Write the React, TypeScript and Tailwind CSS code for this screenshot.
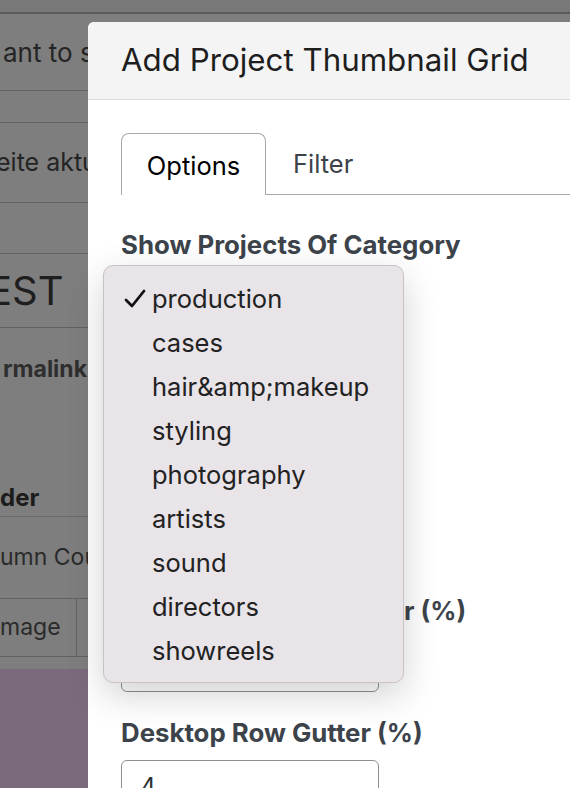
import React from "react";

const items = [
  "production",
  "cases",
  "hair&amp;makeup",
  "styling",
  "photography",
  "artists",
  "sound",
  "directors",
  "showreels",
];

function Field({ label, value }: { label: string; value?: string }) {
  return (
    <div className="mb-[26px]">
      <div className="h-[30px] whitespace-nowrap text-[25.8px] font-bold leading-[30px] text-[#3c434a]">{label}</div>
      <div className="mt-[12px] h-[54px] w-[258px] rounded-[6px] border border-[#8c8f94] bg-white px-[18px] text-[25px] leading-[52px] text-[#2c3338]">
        {value}
      </div>
    </div>
  );
}

export default function App() {
  return (
    <div
      className="relative h-[788px] w-[570px] overflow-hidden bg-[#7e7e7e]"
      style={{ fontFamily: "Inter, 'Noto Sans', sans-serif" }}
    >
      {/* background page under overlay */}
      <div className="flex flex-col whitespace-nowrap text-[#242424]">
        <div className="h-[12px] bg-[#787878]" />
        <div className="h-[2px] bg-[#5a5a5a]" />
        <div className="ml-[3px] flex h-[76px] items-center text-[26px]">ant to see</div>
        <div className="h-px bg-[#626262]" />
        <div className="h-[31px]" />
        <div className="h-px bg-[#626262]" />
        <div className="-ml-[4px] flex h-[79px] items-center text-[25px]">eite aktualisieren</div>
        <div className="h-px bg-[#626262]" />
        <div className="h-[50px]" />
        <div className="h-px bg-[#626262]" />
        <div className="-ml-[12px] flex h-[73px] items-center text-[40px] text-[#1e1e1e]">EST</div>
        <div className="h-px bg-[#626262]" />
        <div className="ml-[3px] flex h-[82px] items-center text-[23px] font-bold text-[#2e2e2e]">rmalink:</div>
        <div className="h-[70px]" />
        <div className="flex h-[36px] items-center text-[24px] font-bold text-[#1c1c1c]">der</div>
        <div className="h-px bg-[#6c6c6c]" />
        <div className="flex h-[81px] items-center text-[23px] text-[#2a2a2a]">umn Count</div>
        <div className="h-px bg-[#626262]" />
        <div className="flex h-[57px]">
          <div className="flex w-[77px] items-center border-r border-[#626262] text-[23px] text-[#2a2a2a]">mage</div>
          <div className="flex-1" />
        </div>
        <div className="h-px bg-[#626262]" />
        <div className="h-[12px]" />
        <div className="h-[200px] bg-[#7b6a7c]" />
      </div>

      {/* modal */}
      <div className="absolute left-[88px] top-[22px] h-[800px] w-[520px] overflow-hidden rounded-tl-[6px] bg-white">
        <div className="flex h-[78px] items-center border-b border-[#dcdcde] bg-[#f4f4f4] pl-[33px]">
          <div className="whitespace-nowrap text-[31.3px] font-normal text-[#1e1e1e]">Add Project Thumbnail Grid</div>
        </div>
        <div className="px-[33px] pt-[33px]">
          <div className="flex h-[62px] items-end border-b border-[#a7aaad]">
            <div className="-mb-px flex h-[62px] w-[145px] items-center justify-center rounded-t-[8px] border border-b-0 border-[#a7aaad] bg-white pt-[3px] text-[25.5px] text-black">
              Options
            </div>
            <div className="flex h-[62px] items-center px-[27px] pt-[3px] text-[25.5px] text-[#3c434a]">Filter</div>
          </div>
          <div className="mt-[35px]">
            <Field label="Show Projects Of Category" value="production" />
            <Field label="Desktop Columns" value="3" />
            <Field label="Mobile Columns" value="1" />
            <Field label="Desktop Column Gutter (%)" value="4" />
            <Field label="Desktop Row Gutter (%)" value="4" />
          </div>
        </div>
      </div>

      {/* open select dropdown */}
      <div className="absolute left-[103px] top-[265px] w-[301px] rounded-[10px] border border-[#c6c2c6] bg-[#e8e4e8] pb-[9px] pt-[11px] shadow-[0_12px_36px_rgba(0,0,0,0.18)]">
        {items.map((it, i) => (
          <div key={it} className="flex h-[44px] items-center text-[25.5px] text-[#222]">
            <div className="flex w-[48px] justify-end pr-[6px]">
              {i === 0 && (
                <svg width="22" height="20" viewBox="0 0 22 20">
                  <path d="M2 11 L8 17 L20 2" fill="none" stroke="#111" strokeWidth="2.8" strokeLinecap="round" strokeLinejoin="round" />
                </svg>
              )}
            </div>
            <span>{it}</span>
          </div>
        ))}
      </div>
    </div>
  );
}
